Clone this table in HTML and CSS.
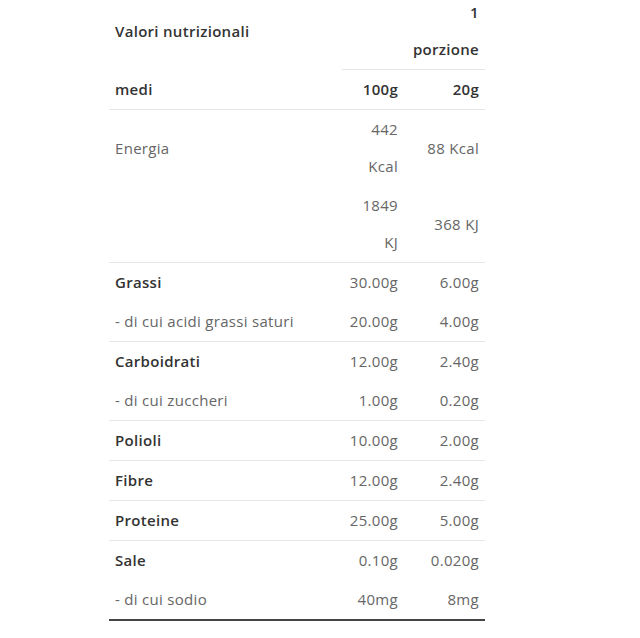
FILE: index.html
```html
<!DOCTYPE html>
<html lang="it">
<head>
<meta charset="utf-8">
<link rel="stylesheet" href="styles.css">
</head>
<body>
<table class="nutri">
  <colgroup>
    <col class="c1"><col class="c2"><col class="c3">
  </colgroup>
  <thead>
    <tr class="head-top">
      <th class="lbl">Valori nutrizionali</th>
      <th class="val line"></th>
      <th class="val line">1 porzione</th>
    </tr>
    <tr class="head-sub">
      <th class="lbl">medi</th>
      <th class="val">100g</th>
      <th class="val">20g</th>
    </tr>
  </thead>
  <tbody>
    <tr class="sep"><td class="lbl plain">Energia</td><td class="val">442 Kcal</td><td class="val">88 Kcal</td></tr>
    <tr><td class="lbl plain"></td><td class="val">1849 KJ</td><td class="val">368 KJ</td></tr>
    <tr class="sep"><td class="lbl strong">Grassi</td><td class="val">30.00g</td><td class="val">6.00g</td></tr>
    <tr><td class="lbl plain">- di cui acidi grassi saturi</td><td class="val">20.00g</td><td class="val">4.00g</td></tr>
    <tr class="sep"><td class="lbl strong">Carboidrati</td><td class="val">12.00g</td><td class="val">2.40g</td></tr>
    <tr><td class="lbl plain">- di cui zuccheri</td><td class="val">1.00g</td><td class="val">0.20g</td></tr>
    <tr class="sep"><td class="lbl strong">Polioli</td><td class="val">10.00g</td><td class="val">2.00g</td></tr>
    <tr class="sep"><td class="lbl strong">Fibre</td><td class="val">12.00g</td><td class="val">2.40g</td></tr>
    <tr class="sep"><td class="lbl strong">Proteine</td><td class="val">25.00g</td><td class="val">5.00g</td></tr>
    <tr class="sep"><td class="lbl strong">Sale</td><td class="val">0.10g</td><td class="val">0.020g</td></tr>
    <tr class="last"><td class="lbl plain">- di cui sodio</td><td class="val">40mg</td><td class="val">8mg</td></tr>
  </tbody>
</table>
</body>
</html>
```

FILE: styles.css
```css
html, body {
  margin: 0;
  padding: 0;
  background: #ffffff;
}
body {
  font-family: "Open Sans", "Liberation Sans", sans-serif;
  font-size: 15px;
  letter-spacing: 0.3px;
  color: #666666;
}
.nutri {
  margin: -7px 0 0 109px;
  width: 376px;
  border-collapse: collapse;
  table-layout: fixed;
}
.c1 { width: 233px; }
.c2 { width: 62px; }
.c3 { width: 81px; }
.nutri th,
.nutri td {
  padding: 1px 6px;
  line-height: 37px;
  vertical-align: middle;
}
.nutri th {
  font-weight: 600;
  color: #333333;
}
.lbl { text-align: left; }
.val { text-align: right; }
.head-top .line {
  border-bottom: 1px solid #e6e6e6;
}
.head-sub th {
  border-bottom: 1px solid #e6e6e6;
}
.sep td {
  border-top: 1px solid #e6e6e6;
}
.strong {
  font-weight: 600;
  color: #333333;
}
.plain {
  color: #666666;
}
.last td {
  border-bottom: 2px solid #444444;
}
```
